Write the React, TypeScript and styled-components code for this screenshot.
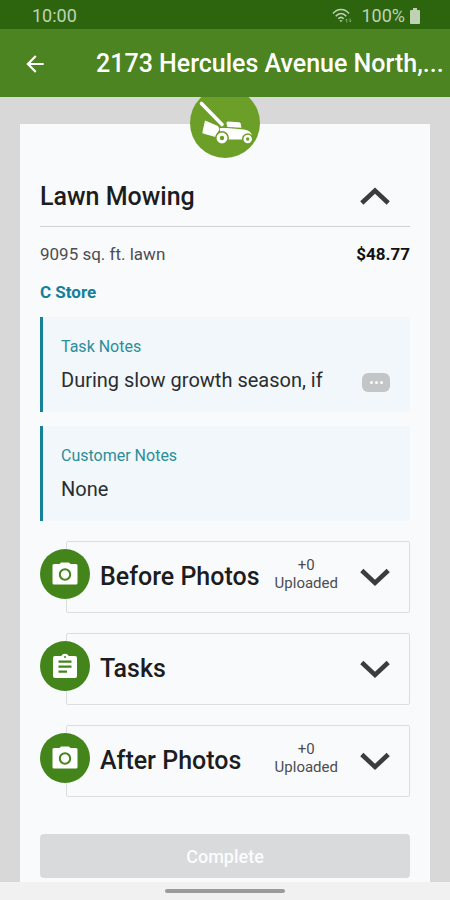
import React from "react";
import styled, { createGlobalStyle, css } from "styled-components";
import { MdArrowBack } from "react-icons/md";

const GlobalStyle = createGlobalStyle`
  *, *::before, *::after { box-sizing: border-box; }
  body {
    margin: 0;
    background: #f1f1f1;
    color: #1c1d1f;
    font-family: Roboto, "Liberation Sans", sans-serif;
  }
  h1, h2, h3, p { margin: 0; }
  button { font-family: inherit; border: 0; padding: 0; background: none; color: inherit; cursor: pointer; }
`;

const Screen = styled.div`
  display: flex;
  flex-direction: column;
  height: 100vh;
`;

const StatusBar = styled.div`
  display: flex;
  align-items: center;
  justify-content: space-between;
  flex: none;
  padding: 7px 30px 4px 32px;
  background: #2d650f;
  color: #bfd3b4;
  font-size: 18px;
  line-height: 18px;
`;

const StatusGroup = styled.div`
  display: flex;
  align-items: center;
  gap: 8px;
`;

const Battery = styled.span`
  display: flex;
  align-items: center;
  gap: 5px;
`;

const AppBar = styled.header`
  display: flex;
  align-items: center;
  gap: 48px;
  flex: none;
  height: 68px;
  padding: 2px 6px 0 22px;
  background: #4b8421;
  color: #fff;
`;

const BackButton = styled.button`
  display: flex;
  flex: none;
`;

const headingText = css`
  font-size: 25px;
  font-weight: 500;
  line-height: 30px;
`;

const AppTitle = styled.h1`
  min-width: 0;
  overflow: hidden;
  white-space: nowrap;
  ${headingText}
`;

const Content = styled.main`
  flex: 1;
  min-height: 0;
  overflow: hidden;
  padding: 27px 20px 0;
  background: #d8d8d8;
`;

const Card = styled.section`
  position: relative;
  min-height: 100%;
  padding: 43px 20px 5px;
  background: #f9fafc;
`;

const ServiceBadge = styled.div`
  position: absolute;
  top: -36px;
  left: 50%;
  width: 70px;
  height: 70px;
  margin-left: -35px;
  border-radius: 50%;
  background: #6c9f27;
`;

const CardHeader = styled.div`
  display: flex;
  align-items: center;
  justify-content: space-between;
  height: 60px;
  padding-right: 20px;
  border-bottom: 1px solid #d0d1d3;
`;

const CardTitle = styled.h2`
  ${headingText}
`;

const ChevronButton = styled.button`
  display: flex;
  flex: none;
`;

const DetailRow = styled.div`
  display: flex;
  align-items: center;
  justify-content: space-between;
  margin-top: 16px;
  font-size: 17px;
  line-height: 22px;
  color: #4c4d50;
`;

const Price = styled.strong`
  color: #111;
  font-weight: 700;
`;

const StoreLink = styled.a`
  display: block;
  width: max-content;
  margin-top: 16px;
  color: #127f9d;
  font-size: 17px;
  font-weight: 700;
  line-height: 22px;
  text-decoration: none;
`;

const Notes = styled.div`
  display: grid;
  gap: 14px;
  margin-top: 14px;
`;

const Note = styled.section`
  height: 95px;
  padding: 20px 20px 0 18px;
  border-left: 3px solid #14829a;
  background: #f1f7fa;
`;

const NoteTitle = styled.h3`
  color: #2c8e9b;
  font-size: 16px;
  font-weight: 400;
  line-height: 20px;
`;

const NoteBody = styled.div`
  display: flex;
  align-items: center;
  justify-content: space-between;
  margin-top: 10px;
  font-size: 20px;
  line-height: 26px;
  color: #2b2d30;
`;

const MoreButton = styled.button`
  display: flex;
  align-items: center;
  justify-content: center;
  gap: 2px;
  width: 28px;
  height: 19px;
  margin-top: 4px;
  border-radius: 6px;
  background: #c3c5c6;
`;

const Dot = styled.span`
  width: 3px;
  height: 3px;
  border-radius: 50%;
  background: #fff;
`;

const Panels = styled.div`
  display: grid;
  gap: 20px;
  margin-top: 20px;
  padding-left: 26px;
`;

const Panel = styled.button`
  display: flex;
  align-items: center;
  width: 100%;
  height: 72px;
  padding-right: 19px;
  border: 1px solid #dcdddf;
  border-radius: 2px;
  text-align: left;
`;

const PanelIcon = styled.span`
  display: flex;
  align-items: center;
  justify-content: center;
  flex: none;
  width: 50px;
  height: 50px;
  margin: 0 10px 6px -27px;
  border-radius: 50%;
  background: #43851b;
  color: #fff;
`;

const PanelTitle = styled.span`
  flex: 1;
  white-space: nowrap;
  ${headingText}
`;

const UploadCount = styled.span`
  display: flex;
  flex-direction: column;
  align-items: center;
  margin: 0 22px 6px 0;
  color: #4c4d50;
  font-size: 15px;
  line-height: 18px;
`;

const CompleteButton = styled.button`
  display: block;
  width: 100%;
  height: 44px;
  margin-top: 37px;
  border-radius: 4px;
  background: #d9dadc;
  color: #fbfcfd;
  font-size: 18px;
  font-weight: 500;
`;

const NavBar = styled.footer`
  display: flex;
  align-items: center;
  justify-content: center;
  flex: none;
  height: 18px;
  background: #f1f1f1;
`;

const HomeHandle = styled.span`
  width: 120px;
  height: 4px;
  border-radius: 2px;
  background: #9b9b9b;
`;

const Chevron = ({ up = false }: { up?: boolean }) => (
  <svg width="30" height="19" viewBox="0 0 30 19" fill="none" stroke="#3a3c3f" strokeWidth="4.6" aria-hidden="true">
    <path d={up ? "M1.8 16 15 3.6 28.2 16" : "M1.8 2.5 15 14.9 28.2 2.5"} />
  </svg>
);

const WifiIcon = () => (
  <svg width="21" height="16" viewBox="0 0 21 16" fill="none" stroke="currentColor" strokeWidth="1.6" aria-hidden="true">
    <path d="M1 5.5C5.5.2 12.5.2 17 5.5M3.7 8.2c3.2-3.7 7.4-3.7 10.6 0M6.3 10.8c1.8-1.8 3.6-1.8 5.4 0" />
    <path d="m7.3 12.2 1.7 2 1.7-2Z" fill="currentColor" stroke="none" />
    <path d="M14.8 14.5V11m-1.2 1.3 1.2-1.3M18 10.5V14m1.2-1.3L18 14" strokeWidth="1" opacity=".6" />
  </svg>
);

const BatteryIcon = () => (
  <svg width="10" height="16" viewBox="0 0 10 16" fill="currentColor" aria-hidden="true">
    <path d="M3 0h4v2h2q1 0 1 1v12q0 1-1 1H1q-1 0-1-1V3q0-1 1-1h2Z" />
  </svg>
);

const CameraIcon = () => (
  <svg width="26" height="24" viewBox="0 0 26 24" aria-hidden="true">
    <path fill="currentColor" d="M7.5 2 9 .5h8L18.500 2H24q1.500 0 1.500 1.500v17.500q0 1.500-1.500 1.500H2Q.5 22.500.5 21V3.500Q.5 2 2 2Z" />
    <circle cx="13" cy="12.500" r="5.200" fill="none" stroke="#43851b" strokeWidth="2" />
  </svg>
);

const ClipboardIcon = () => (
  <svg width="26" height="26" viewBox="0 0 26 26" aria-hidden="true">
    <path fill="currentColor" d="M3 3h6.200Q10.500.8 13 .8T16.800 3H23q2 0 2 2v18q0 2-2 2H3q-2 0-2-2V5q0-2 2-2Z" />
    <circle cx="13" cy="4" r="1" fill="#43851b" />
    <path d="M6.500 8.700h13M6.500 13.700h13M6.500 18.700h8.500" stroke="#43851b" strokeWidth="2.300" />
  </svg>
);

const MowerIcon = () => (
  <svg width="70" height="70" viewBox="0 0 70 70" aria-hidden="true">
    <path d="M11.500 15.500 32 36.500" stroke="#fff" strokeWidth="3.600" strokeLinecap="round" />
    <path fill="#fff" d="m15 32.500 13 5.500 1.500 3-4 8-12.500-3.500q-.8-.3-.6-1.200ZM38 33.500l11 .8q1.500.2 1.800 1.500l.6 4-14-.8-.9-3.500q-.2-2 1.500-2ZM30 40h7l17 1.500q7 1 8 6v4H30Z" />
    <circle cx="32" cy="50" r="6.200" fill="#fff" stroke="#6c9f27" strokeWidth="1.500" />
    <circle cx="32" cy="50" r="2.200" fill="#6c9f27" />
    <circle cx="57.700" cy="51" r="5" fill="#fff" stroke="#6c9f27" strokeWidth="1.500" />
    <circle cx="57.700" cy="51" r="1.700" fill="#6c9f27" />
  </svg>
);

const panels = [
  { title: "Before Photos", icon: <CameraIcon />, uploaded: 0 },
  { title: "Tasks", icon: <ClipboardIcon /> },
  { title: "After Photos", icon: <CameraIcon />, uploaded: 0 },
];

export default function App() {
  return (
    <>
      <GlobalStyle />
      <Screen>
        <StatusBar>
          <span>10:00</span>
          <StatusGroup>
            <WifiIcon />
            <Battery>
              100%
              <BatteryIcon />
            </Battery>
          </StatusGroup>
        </StatusBar>
        <AppBar>
          <BackButton aria-label="Back">
            <MdArrowBack size={26} />
          </BackButton>
          <AppTitle>2173 Hercules Avenue North,...</AppTitle>
        </AppBar>
        <Content>
          <Card>
            <ServiceBadge>
              <MowerIcon />
            </ServiceBadge>
            <CardHeader>
              <CardTitle>Lawn Mowing</CardTitle>
              <ChevronButton aria-label="Collapse Lawn Mowing" aria-expanded="true">
                <Chevron up />
              </ChevronButton>
            </CardHeader>
            <DetailRow>
              <span>9095 sq. ft. lawn</span>
              <Price>$48.77</Price>
            </DetailRow>
            <StoreLink href="#store">C Store</StoreLink>
            <Notes>
              <Note>
                <NoteTitle>Task Notes</NoteTitle>
                <NoteBody>
                  <p>During slow growth season, if</p>
                  <MoreButton aria-label="Show full note">
                    <Dot />
                    <Dot />
                    <Dot />
                  </MoreButton>
                </NoteBody>
              </Note>
              <Note>
                <NoteTitle>Customer Notes</NoteTitle>
                <NoteBody>
                  <p>None</p>
                </NoteBody>
              </Note>
            </Notes>
            <Panels>
              {panels.map(({ title, icon, uploaded }) => (
                <Panel key={title} aria-expanded="false">
                  <PanelIcon>{icon}</PanelIcon>
                  <PanelTitle>{title}</PanelTitle>
                  {uploaded !== undefined && (
                    <UploadCount>
                      <span>+{uploaded}</span>
                      <span>Uploaded</span>
                    </UploadCount>
                  )}
                  <Chevron />
                </Panel>
              ))}
            </Panels>
            <CompleteButton disabled>Complete</CompleteButton>
          </Card>
        </Content>
        <NavBar>
          <HomeHandle />
        </NavBar>
      </Screen>
    </>
  );
}
